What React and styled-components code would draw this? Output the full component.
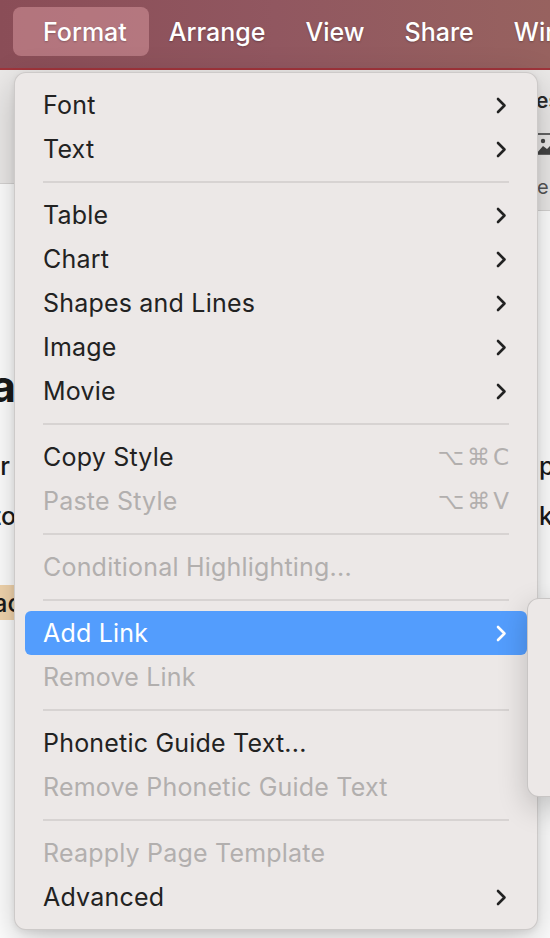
import React from "react";
import styled, { createGlobalStyle } from "styled-components";

const GlobalStyle = createGlobalStyle`
  html, body {
    margin: 0;
    padding: 0;
    background: #ffffff;
  }
  body {
    font-family: "Inter", "Noto Sans", "DejaVu Sans", sans-serif;
    -webkit-font-smoothing: antialiased;
  }
`;

const Screen = styled.div`
  position: relative;
  width: 550px;
  height: 938px;
  overflow: hidden;
  display: flex;
  flex-direction: column;
  background: #ffffff;
`;

const MenuBar = styled.div`
  height: 70px;
  box-sizing: border-box;
  padding-bottom: 5px;
  flex-shrink: 0;
  display: flex;
  align-items: center;
  background: linear-gradient(90deg, #8a4d57 0%, #915760 50%, #97625f 100%);
  border-bottom: 2px solid #a0343b;
  overflow: hidden;
`;

const BarStub = styled.div`
  width: 13px;
  flex-shrink: 0;
  display: flex;
  justify-content: flex-end;
  overflow: hidden;
`;

const BarItem = styled.div`
  flex-shrink: 0;
  height: 49px;
  display: flex;
  align-items: center;
  padding: ${(p) => (p.$selected ? "0 22px 0 30px" : "0 20px")};
  border-radius: 8px;
  background: ${(p) => (p.$selected ? "rgba(214, 150, 156, 0.55)" : "transparent")};
  color: #ffffff;
  font-size: 25px;
  font-weight: 500;
  white-space: nowrap;
  text-shadow: 0 1px 2px rgba(0, 0, 0, 0.25);
`;

const TopArea = styled.div`
  display: flex;
  align-items: flex-start;
  justify-content: space-between;
  flex-shrink: 0;
`;

const ToolbarPane = styled.div`
  flex: 1;
  height: 113px;
  background: #ebe9e8;
  border-bottom: 1px solid #d6d4d3;
`;

const SidePane = styled.div`
  width: 12px;
  height: 140px;
  background: #ebe9e8;
  border-bottom: 1px solid #d6d4d3;
  display: flex;
  flex-direction: column;
  align-items: flex-start;
  overflow: hidden;
  color: #333;
`;

const SideLabel = styled.div`
  font-size: ${(p) => p.$size || 20}px;
  font-weight: ${(p) => p.$weight || 400};
  color: ${(p) => p.$color || "#333"};
  margin-top: ${(p) => p.$top || 0}px;
  margin-left: ${(p) => p.$left || 0}px;
  line-height: 1;
  white-space: nowrap;
`;

const PictureIcon = styled.svg`
  margin-top: 22px;
  margin-left: -2px;
  flex-shrink: 0;
`;

const Document = styled.div`
  flex: 1;
  display: flex;
  flex-direction: column;
  background: #ffffff;
`;

const DocRow = styled.div`
  display: flex;
  justify-content: space-between;
  align-items: center;
  height: ${(p) => p.$h || 50}px;
  margin-top: ${(p) => p.$mt || 0}px;
`;

const Fragment = styled.div`
  width: ${(p) => p.$w || 14}px;
  height: 100%;
  display: flex;
  align-items: center;
  justify-content: ${(p) => (p.$right ? "flex-start" : "flex-end")};
  overflow: hidden;
  white-space: nowrap;
  font-size: ${(p) => p.$size || 25}px;
  font-weight: ${(p) => p.$weight || 500};
  color: #1a1a1a;
  background: ${(p) => p.$bg || "transparent"};
`;

const Menu = styled.div`
  position: absolute;
  left: 14px;
  top: 72px;
  width: 524px;
  box-sizing: border-box;
  padding: 10px 0;
  background: #ece8e7;
  border: 1px solid rgba(0, 0, 0, 0.13);
  border-radius: 12px;
  box-shadow: 0 12px 36px rgba(0, 0, 0, 0.22), 0 2px 6px rgba(0, 0, 0, 0.08);
  display: flex;
  flex-direction: column;
`;

const Row = styled.div`
  height: 44px;
  margin: 0 10px;
  padding: 0 20px 0 18px;
  display: flex;
  align-items: center;
  justify-content: space-between;
  border-radius: 6px;
  font-size: 25px;
  letter-spacing: 0.2px;
  color: ${(p) => (p.$active ? "#ffffff" : p.$disabled ? "#b2afae" : "#222222")};
  background: ${(p) => (p.$active ? "#539dfd" : "transparent")};
`;

const Label = styled.span`
  white-space: nowrap;
`;

const Shortcut = styled.span`
  font-family: "DejaVu Sans", sans-serif;
  font-size: 23px;
  color: #b2afae;
  letter-spacing: 3px;
  margin-right: -5px;
`;

const Separator = styled.div`
  height: 22px;
  margin: 0 28px 0 28px;
  display: flex;
  align-items: center;
  &::after {
    content: "";
    flex: 1;
    height: 2px;
    background: #d7d3d2;
  }
`;

const Submenu = styled.div`
  position: absolute;
  left: 527px;
  top: 598px;
  width: 60px;
  height: 197px;
  background: #ece8e7;
  border: 1px solid rgba(0, 0, 0, 0.15);
  border-radius: 12px;
  box-shadow: 0 10px 30px rgba(0, 0, 0, 0.2);
`;

const Chevron = ({ color }) => (
  <svg width="12" height="17" viewBox="0 0 12 17">
    <polyline
      points="3,2 9.5,8.5 3,15"
      fill="none"
      stroke={color}
      strokeWidth="2.6"
      strokeLinecap="round"
      strokeLinejoin="round"
    />
  </svg>
);

const items = [
  { label: "Font", sub: true },
  { label: "Text", sub: true },
  { sep: true },
  { label: "Table", sub: true },
  { label: "Chart", sub: true },
  { label: "Shapes and Lines", sub: true },
  { label: "Image", sub: true },
  { label: "Movie", sub: true },
  { sep: true },
  { label: "Copy Style", shortcut: "⌥⌘C" },
  { label: "Paste Style", shortcut: "⌥⌘V", disabled: true },
  { sep: true },
  { label: "Conditional Highlighting...", disabled: true },
  { sep: true },
  { label: "Add Link", sub: true, active: true },
  { label: "Remove Link", disabled: true },
  { sep: true },
  { label: "Phonetic Guide Text..." },
  { label: "Remove Phonetic Guide Text", disabled: true },
  { sep: true },
  { label: "Reapply Page Template", disabled: true },
  { label: "Advanced", sub: true },
];

export default function App() {
  return (
    <>
      <GlobalStyle />
      <Screen>
        <MenuBar>
          <BarStub>
            <BarItem>Insert</BarItem>
          </BarStub>
          <BarItem $selected>Format</BarItem>
          <BarItem>Arrange</BarItem>
          <BarItem>View</BarItem>
          <BarItem>Share</BarItem>
          <BarItem>Window</BarItem>
        </MenuBar>

        <TopArea>
          <ToolbarPane />
          <SidePane>
            <SideLabel $size={21} $weight={600} $top={20} $left={-2} $color="#2a2a2a">
              es
            </SideLabel>
            <PictureIcon width="20" height="22" viewBox="0 0 20 22">
              <rect x="1" y="1" width="26" height="20" fill="none" stroke="#444" strokeWidth="1.6" />
              <circle cx="7" cy="8" r="2.2" fill="#444" />
              <path d="M1 20 L7 13 L11 16 L16 11 L20 15 L20 21 L1 21 Z" fill="#444" />
            </PictureIcon>
            <SideLabel $size={20} $top={22} $left={-1} $color="#555">
              e
            </SideLabel>
          </SidePane>
        </TopArea>

        <Document>
          <DocRow $h={50} $mt={150}>
            <Fragment $size={44} $weight={700} $w={16}>
              Para
            </Fragment>
            <Fragment $right />
          </DocRow>
          <DocRow $h={50} $mt={30}>
            <Fragment $w={10}>for</Fragment>
            <Fragment $right $w={11}>
              pp
            </Fragment>
          </DocRow>
          <DocRow $h={50}>
            <Fragment $w={16}>to</Fragment>
            <Fragment $right $w={11}>
              k
            </Fragment>
          </DocRow>
          <DocRow $h={35} $mt={44}>
            <Fragment $w={22} $bg="#f3d6ae">
              ac
            </Fragment>
          </DocRow>
        </Document>

        <Menu>
          {items.map((it, i) =>
            it.sep ? (
              <Separator key={i} />
            ) : (
              <Row key={i} $active={it.active} $disabled={it.disabled}>
                <Label>{it.label}</Label>
                {it.sub && <Chevron color={it.active ? "#ffffff" : "#222222"} />}
                {it.shortcut && <Shortcut>{it.shortcut}</Shortcut>}
              </Row>
            )
          )}
        </Menu>

        <Submenu />
      </Screen>
    </>
  );
}
